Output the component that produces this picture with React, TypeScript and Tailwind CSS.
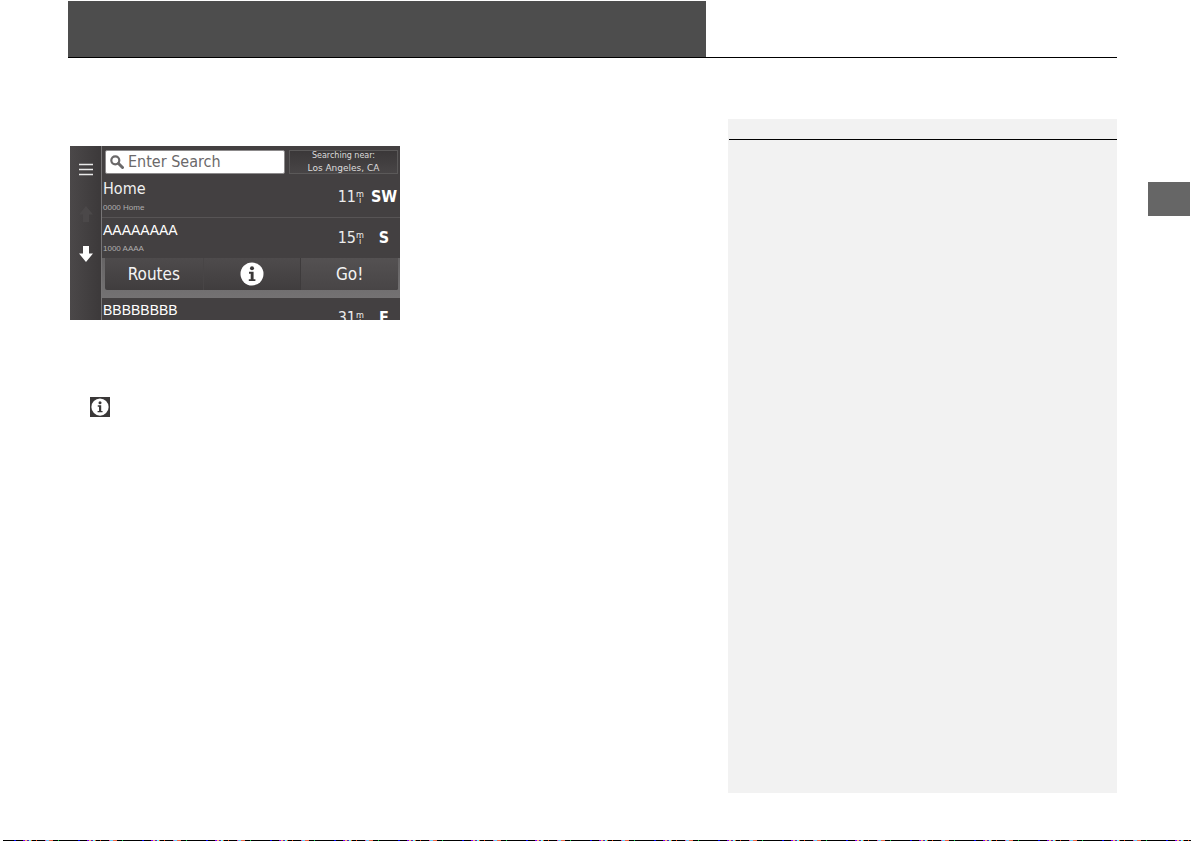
import type { ReactNode } from "react";

type Place = {
  name: string;
  address?: string;
  distance: number;
  heading: string;
  plain?: boolean;
};

const home: Place = { name: "Home", address: "0000 Home", distance: 11, heading: "SW" };
const selected: Place = { name: "AAAAAAAA", address: "1000 AAAA", distance: 15, heading: "S", plain: true };
const next: Place = { name: "BBBBBBBB", distance: 31, heading: "E", plain: true };

function InfoIcon({ className }: { className: string }) {
  return (
    <svg viewBox="0 0 24 24" className={className} aria-hidden="true">
      <circle cx="12" cy="12" r="11.5" fill="#fff" />
      <circle cx="12" cy="6.2" r="2" fill="#3a3838" />
      <path d="M9 9.8h4.6v7.4h1.8v1.9H8.8v-1.9h1.9v-5.5H9z" fill="#3a3838" />
    </svg>
  );
}

function ArrowIcon({ up, className }: { up?: boolean; className: string }) {
  return (
    <svg viewBox="0 0 14 16" className={className} fill="currentColor" aria-hidden="true">
      <path d={up ? "M7 0l7 8.5h-4V16H4V8.500H0z" : "M4 0h6v7.500h4L7 16 0 7.500h4z"} />
    </svg>
  );
}

function PlaceRow({ place, children }: { place: Place; children?: ReactNode }) {
  return (
    <li>
      <div className="flex h-10 justify-between">
        <div className="flex flex-col pl-px">
          {place.plain ? (
            <span className="font-['Liberation_Sans',sans-serif] text-[14px] leading-6">{place.name}</span>
          ) : (
            <span className="text-[16px] leading-6 text-[#f0f0f0]">{place.name}</span>
          )}
          <span className="font-['Liberation_Sans',sans-serif] text-[8px] leading-[14px] text-[#b0aeae]">
            {place.address}
          </span>
        </div>
        <div className="flex h-10 items-center">
          <span className="text-[16px] leading-5 text-[#ececec]">{place.distance}</span>
          <span className="flex w-2 flex-col items-center text-[9px] leading-[6px] text-[#ececec]">
            <span>m</span>
            <span>i</span>
          </span>
          <span className="ml-1 w-8 text-center text-[16px] leading-5 font-bold">{place.heading}</span>
        </div>
      </div>
      {children}
    </li>
  );
}

function Navigator() {
  return (
    <section
      aria-label="Search results"
      className="flex h-[174px] w-[330px] overflow-hidden bg-[#434041] font-['DejaVu_Sans_Condensed','DejaVu_Sans',sans-serif] text-white"
    >
      <nav className="flex w-8 flex-col items-center border-r border-[#777576] bg-linear-to-r from-[#4b4849] to-[#3c393a] pt-4">
        <button aria-label="Menu" className="flex h-4 w-4 items-center justify-center">
          <svg viewBox="0 0 14 14" className="h-3.5 w-3.5" aria-hidden="true">
            <path d="M0 1.500h14M0 6.500h14M0 11.500h14" stroke="#e9e9e9" strokeWidth="1.600" />
          </svg>
        </button>
        <button aria-label="Scroll up" className="mt-7 text-[#4b4849]">
          <ArrowIcon up className="h-4 w-3.5" />
        </button>
        <button aria-label="Scroll down" className="mt-6 text-white">
          <ArrowIcon className="h-4 w-3.5" />
        </button>
      </nav>
      <div className="min-w-0 flex-1">
        <div className="flex gap-1 pt-1 pr-0.5 pb-[3px] pl-[3px]">
          <label className="flex h-6 min-w-0 flex-1 items-center gap-1 rounded-xs border border-[#8c8a8b] bg-white pl-1 text-[#6b696a]">
            <svg viewBox="0 0 14 14" className="h-3.5 w-3.5 shrink-0" fill="none" stroke="currentColor" aria-hidden="true">
              <circle cx="5.300" cy="5.300" r="4" strokeWidth="2.200" />
              <path d="M8.500 8.500l4 4" strokeWidth="3" strokeLinecap="round" />
            </svg>
            <input
              aria-label="Enter Search"
              placeholder="Enter Search"
              className="w-full min-w-0 bg-transparent text-[16px] leading-5 outline-none placeholder:text-[#6b696a]"
            />
          </label>
          <button className="flex h-6 w-[109px] shrink-0 flex-col items-center justify-center border border-[#5b5959] bg-linear-to-b from-[#3b3839] to-[#484546] font-['DejaVu_Sans',sans-serif] text-[#dddcdc]">
            <span className="text-[8px] leading-3">Searching near:</span>
            <span className="text-[9px] leading-3">Los Angeles, CA</span>
          </button>
        </div>
        <ul>
          <PlaceRow place={home} />
          <li aria-hidden="true" className="h-px bg-[#575455]" />
          <PlaceRow place={selected}>
            <div className="bg-linear-to-b from-[#666465] to-[#747273] pr-0.5 pb-2 pl-[3px]">
              <div className="grid h-8 grid-cols-3 overflow-hidden rounded-b-xs bg-linear-to-b from-[#4e4b4c] to-[#403d3e] text-[17px] leading-5 text-[#f4f4f4]">
                <button>Routes</button>
                <button aria-label="Information" className="flex items-center justify-center border-l border-[#484546]">
                  <InfoIcon className="h-6 w-6" />
                </button>
                <button className="border-l border-[#3e3b3c] bg-linear-to-b from-[#545152] to-[#484546]">
                  Go!
                </button>
              </div>
            </div>
          </PlaceRow>
          <PlaceRow place={next} />
        </ul>
      </div>
    </section>
  );
}

export default function App() {
  return (
    <div className="flex min-h-screen flex-col bg-white pt-px">
      <div className="flex flex-1">
        <div className="ml-[68px] flex flex-1 flex-col">
          <header className="grid grid-cols-[638fr_411fr] border-b border-black">
            <div className="h-14 bg-[#4d4d4d]" />
          </header>
          <div className="mb-[47px] grid flex-1 grid-cols-[660fr_389fr] pt-[61px]">
            <main className="pt-[27px] pl-0.5">
              <Navigator />
              <div className="mt-[77px] ml-5 flex h-5 w-5 items-center justify-center bg-[#3a3838]">
                <InfoIcon className="h-[18px] w-[18px]" />
              </div>
            </main>
            <aside className="bg-[#f2f2f2] pt-5 pl-px">
              <hr className="border-black" />
            </aside>
          </div>
        </div>
        <div className="w-[74px] pt-[181px] pr-px pl-[31px]">
          <div className="h-[34px] bg-[#666666]" />
        </div>
      </div>
      <footer className="ml-[3px] h-px bg-[repeating-linear-gradient(90deg,#000_0_11px,#00f_11px_13px,#000_13px_20px,#80f_20px_22px,#fa6_22px_24px,#62a_24px_26px,#6ff_26px_28px,#f50_28px_29px,#000_29px_33px,#f40_33px_34px,#000_34px_42px,#f3a_42px_43px,#6cf_43px_46px,#e64_46px_50px,#000_50px_55px,#0d4_55px_56px,#000_56px_64px)]" />
    </div>
  );
}
